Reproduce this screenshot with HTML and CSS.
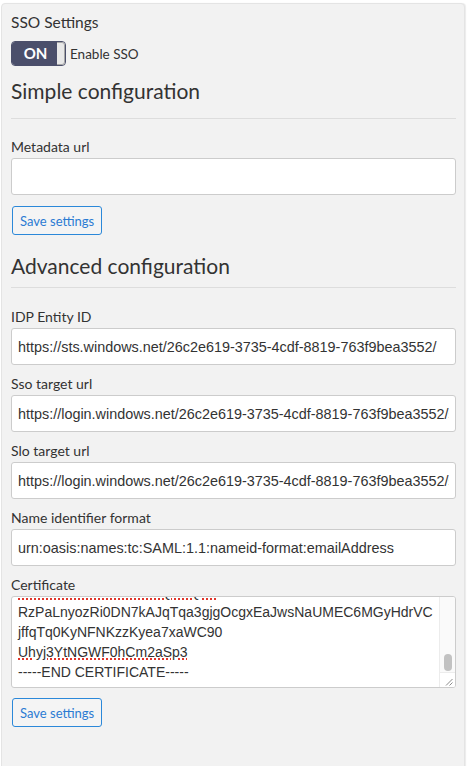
FILE: index.html
```html
<!DOCTYPE html>
<html>
<head>
<meta charset="utf-8">
<link rel="stylesheet" href="styles.css">
</head>
<body>
<div class="panel">
  <div class="panel-title">SSO Settings</div>
  <div class="switch-row">
    <span class="switch"><span class="switch-on">ON</span><span class="switch-knob"></span></span>
    <span class="switch-label">Enable SSO</span>
  </div>

  <h3 class="section-title section-simple">Simple configuration</h3>
  <div class="field">
    <label class="field-label">Metadata url</label>
    <input class="field-input" type="text" value="">
  </div>
  <button class="btn-save">Save settings</button>

  <h3 class="section-title section-advanced">Advanced configuration</h3>
  <div class="field">
    <label class="field-label">IDP Entity ID</label>
    <input class="field-input" type="text" value="https://sts.windows.net/26c2e619-3735-4cdf-8819-763f9bea3552/">
  </div>
  <div class="field">
    <label class="field-label">Sso target url</label>
    <input class="field-input" type="text" value="https://login.windows.net/26c2e619-3735-4cdf-8819-763f9bea3552/saml2">
  </div>
  <div class="field">
    <label class="field-label">Slo target url</label>
    <input class="field-input" type="text" value="https://login.windows.net/26c2e619-3735-4cdf-8819-763f9bea3552/saml2">
  </div>
  <div class="field">
    <label class="field-label">Name identifier format</label>
    <input class="field-input" type="text" value="urn:oasis:names:tc:SAML:1.1:nameid-format:emailAddress">
  </div>
  <div class="field field-last">
    <label class="field-label">Certificate</label>
    <div class="cert-box">
      <div class="cert-text">
        <div class="cert-line"><span class="misspelled">8ZG5HcIA0HR3b1EEsQwhQzN</span></div>
        <div class="cert-line">RzPaLnyozRi0DN7kAJqTqa3gjgOcgxEaJwsNaUMEC6MGyHdrVC</div>
        <div class="cert-line">jffqTq0KyNFNKzzKyea7xaWC90</div>
        <div class="cert-line"><span class="misspelled">Uhyj3YtNGWF0hCm2aSp3</span></div>
        <div class="cert-line">-----END CERTIFICATE-----</div>
      </div>
      <div class="cert-scroll">
        <div class="scroll-track"><span class="scroll-thumb"></span></div>
        <div class="scroll-corner">
          <svg width="14" height="14" viewBox="0 0 14 14"><path d="M12.5 6 L6 12.5 M12.5 9.5 L9.5 12.5" stroke="#8a8a8a" stroke-width="1" fill="none"/></svg>
        </div>
      </div>
    </div>
  </div>
  <button class="btn-save">Save settings</button>
</div>
</body>
</html>
```

FILE: styles.css
```css
html, body {
  margin: 0;
  padding: 0;
  background: #ffffff;
}

body {
  font-family: Lato, "Open Sans", sans-serif;
  color: #333333;
  font-size: 14px;
  height: 766px;
  overflow: hidden;
}

.panel {
  margin: 3px 0 0 1px;
  width: 445px;
  height: 800px;
  background: #f2f2f2;
  border: 1px solid #e4e4e4;
  border-radius: 4px 4px 0 0;
  box-shadow: 1px 0 1px rgba(0,0,0,0.08);
  padding: 8px 8px 0 9px;
}

.panel-title {
  font-size: 15.5px;
  line-height: 21px;
  color: #333;
}

.switch-row {
  display: flex;
  align-items: center;
  margin-top: 8px;
  height: 25px;
}

.switch {
  display: flex;
  width: 55px;
  height: 25px;
  box-sizing: border-box;
  border-radius: 4px;
  overflow: hidden;
  border: 1px solid #4b4f6b;
}

.switch-on {
  width: 45px;
  background: #4b4f6b;
  color: #ffffff;
  font-weight: 700;
  font-size: 15px;
  line-height: 23px;
  text-align: center;
  padding-left: 2px;
  box-sizing: border-box;
}

.switch-knob {
  flex: 1;
  background: #e8e8e8;
  border: 1px solid #a6a6a6;
  border-left: none;
  border-radius: 0 3px 3px 0;
}

.switch-label {
  margin-left: 4px;
  font-size: 13.5px;
  color: #333;
}

.section-title {
  margin: 0;
  font-weight: 400;
  font-size: 21px;
  line-height: 26px;
  color: #333;
  border-bottom: 1px solid #dddddd;
}

.section-simple {
  margin-top: 12px;
  padding-bottom: 14px;
  margin-bottom: 18px;
}

.section-advanced {
  margin-top: 18px;
  padding-bottom: 8px;
  margin-bottom: 19px;
}

.field {
  margin-bottom: 9px;
}

.field-last {
  margin-bottom: 10px;
}

.field-label {
  display: block;
  font-size: 14px;
  line-height: 20px;
  margin-bottom: 1px;
  color: #333;
}

.field-input {
  display: block;
  box-sizing: border-box;
  width: 100%;
  height: 37px;
  margin: 0;
  padding: 0 6px;
  border: 1px solid #cccccc;
  border-radius: 3px;
  background: #ffffff;
  font-family: "Liberation Sans", Arial, sans-serif;
  font-size: 14.4px;
  color: #333;
  outline: none;
}

.btn-save {
  display: block;
  margin: 11px 0 0 1px;
  height: 29px;
  padding: 0 7px;
  background: #f4f4f4;
  border: 1px solid #2b88d9;
  border-radius: 3px;
  color: #2b7bd3;
  font-family: Lato, sans-serif;
  font-size: 13px;
}

.field-last + .btn-save {
  margin-top: 0;
}

.cert-box {
  display: flex;
  box-sizing: border-box;
  height: 92px;
  border: 1px solid #cccccc;
  border-radius: 3px;
  background: #ffffff;
  overflow: hidden;
}

.cert-text {
  flex: 1;
  display: flex;
  flex-direction: column;
  justify-content: flex-end;
  overflow: hidden;
  padding: 0 6px 5px 6px;
  font-family: "Liberation Sans", Arial, sans-serif;
  font-size: 14px;
  line-height: 20px;
  color: #333;
}

.cert-line {
  white-space: nowrap;
  flex: none;
}

.misspelled {
  text-decoration: underline dotted #e0352b;
  text-decoration-thickness: 2px;
  text-underline-offset: 1px;
}

.cert-scroll {
  width: 15px;
  display: flex;
  flex-direction: column;
  border-left: 1px solid #ececec;
  background: #fafafa;
}

.scroll-track {
  flex: 1;
  display: flex;
  flex-direction: column;
  justify-content: flex-end;
  align-items: center;
  padding-bottom: 1px;
}

.scroll-thumb {
  display: block;
  width: 8px;
  height: 17px;
  border-radius: 4px;
  background: #c2c2c2;
}

.scroll-corner {
  height: 14px;
  border-top: 1px solid #ececec;
  background: #ffffff;
}

.scroll-corner svg {
  display: block;
}
```
